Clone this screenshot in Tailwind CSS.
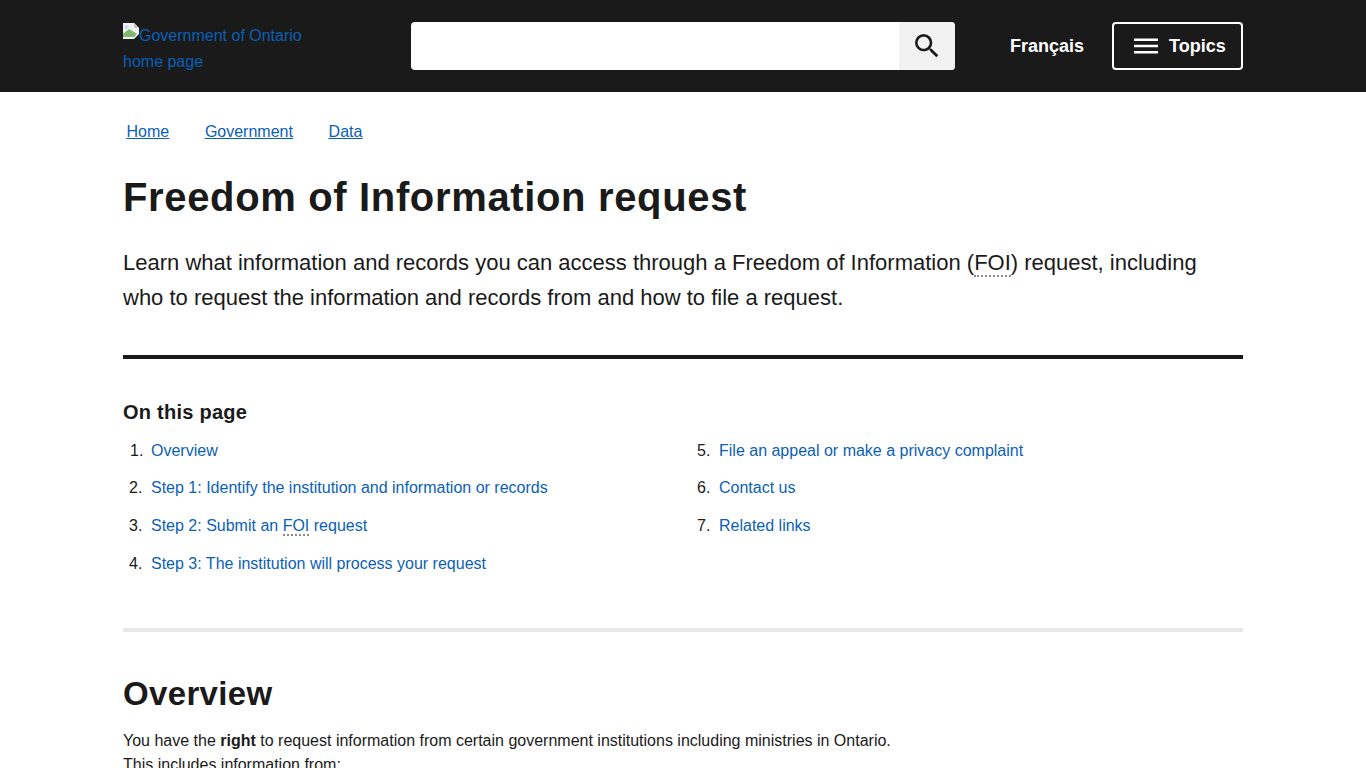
<!DOCTYPE html>
<html lang="en"><head><meta charset="utf-8"><title>Freedom of Information request</title>
<script src="https://cdn.jsdelivr.net/npm/@tailwindcss/browser@4"></script></head>
<body class="font-['Liberation_Sans',Arial,sans-serif] text-[#1a1a1a] bg-white h-[768px] overflow-hidden">
<header class="bg-[#1a1a1a] h-[92px]">
<div class="w-[1120px] mx-auto h-full flex items-center">
<a href="#" class="w-[288px] h-[52px] pt-[5px] box-content text-base leading-[26px] text-[#0b5fb8] block">
<svg class="inline-block align-top" width="16" height="16" viewBox="0 0 16 16"><path d="M0 0h11l5 5v11H0z" fill="#eef1f5"/><path d="M11 0v5h5" fill="#c8c8c8"/><path d="M0 14V11l6-5 5 3 3 2-3 3z" fill="#7fb868"/><path d="M11 16l5-5v5z" fill="#1a1a1a"/><circle cx="3.500" cy="4" r="2" fill="#c6dcf4"/></svg>Government of Ontario<br>home page</a>
<form class="w-[544px] h-12 flex rounded-[4px] overflow-hidden bg-white">
<div class="flex-1"></div>
<div class="w-14 h-12 bg-[#f2f2f2] flex items-center justify-center">
<svg width="32" height="32" viewBox="0 0 24 24" fill="#1a1a1a"><path d="M15.5 14h-.79l-.28-.27A6.47 6.47 0 0 0 16 9.5 6.5 6.5 0 1 0 9.5 16c1.61 0 3.09-.59 4.23-1.57l.27.28v.79l5 4.99L20.49 19l-4.99-5zm-6 0C7.01 14 5 11.99 5 9.5S7.01 5 9.5 5 14 7.01 14 9.500 11.99 14 9.500 14z"/></svg>
</div></form>
<a href="#" class="ml-[55px] text-white font-bold text-lg leading-6">Français</a>
<div class="ml-[28px] w-[131px] h-12 border-2 border-white rounded-[4px] flex items-center text-white font-bold text-lg pl-[20px]">
<svg class="mr-[11px]" width="24" height="24" viewBox="0 0 24 24" fill="#fff"><path d="M0 4.500h24v2.500H0zM0 10.800h24v2.500H0zM0 17h24v2.500H0z"/></svg>Topics</div>
</div></header>
<main class="w-[1120px] mx-auto">
<nav class="pt-[28px] flex text-base leading-6 text-[#0b5fb8] pl-[3.5px] gap-[35.7px] underline"><a href="#">Home</a><a href="#">Government</a><a href="#">Data</a></nav>
<h1 class="mt-[27px] text-[40px] leading-[52px] font-bold tracking-[0.65px]">Freedom of Information request</h1>
<p class="mt-[22px] text-[22px] leading-[35px]">Learn what information and records you can access through a Freedom of Information (<abbr class="no-underline border-b-2 border-dotted border-[#8a8a8a]">FOI</abbr>) request, including who to request the information and records from and how to file a request.</p>
<hr class="mt-[40px] border-0 h-1 bg-[#1a1a1a]">
<h2 class="mt-[39px] text-xl leading-7 font-bold tracking-[0.25px]">On this page</h2>
<div class="mt-[13px] grid grid-cols-2 gap-x-4 text-base leading-6">
<ol>
<li class="h-[37px] flex"><span class="w-7 pl-[7px]">1.</span><a href="#" class="text-[#0b5fb8]">Overview</a></li>
<li class="h-[38px] flex"><span class="w-7 pl-[6px]">2.</span><a href="#" class="text-[#0b5fb8]">Step 1: Identify the institution and information or records</a></li>
<li class="h-[38px] flex"><span class="w-7 pl-[6px]">3.</span><a href="#" class="text-[#0b5fb8]">Step 2: Submit an <abbr class="no-underline border-b-2 border-dotted border-[#8a8a8a]">FOI</abbr> request</a></li>
<li class="h-[38px] flex"><span class="w-7 pl-[6px]">4.</span><a href="#" class="text-[#0b5fb8]">Step 3: The institution will process your request</a></li>
</ol>
<ol>
<li class="h-[37px] flex"><span class="w-7 pl-[6px]">5.</span><a href="#" class="text-[#0b5fb8]">File an appeal or make a privacy complaint</a></li>
<li class="h-[38px] flex"><span class="w-7 pl-[6px]">6.</span><a href="#" class="text-[#0b5fb8]">Contact us</a></li>
<li class="h-[38px] flex"><span class="w-7 pl-[6px]">7.</span><a href="#" class="text-[#0b5fb8]">Related links</a></li>
</ol>
</div>
<hr class="mt-[38px] border-0 h-1 bg-[#e8e8e8]">
<h2 class="mt-[39px] text-[33px] leading-[46px] font-bold tracking-[0.35px]">Overview</h2>
<p class="mt-[12px] text-base leading-6">You have the <strong>right</strong> to request information from certain government institutions including ministries in Ontario.</p>
<p class="text-base leading-6">This includes information from:</p>
</main></body></html>
